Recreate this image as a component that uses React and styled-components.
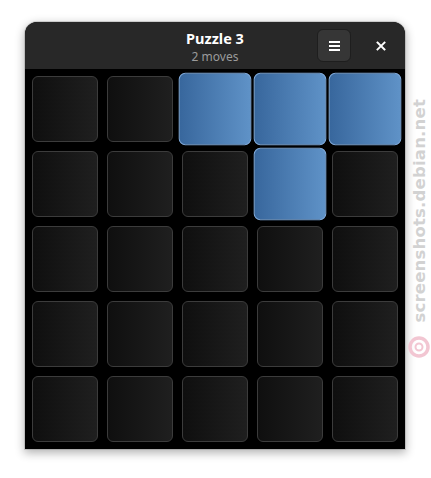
import React from "react";
import styled, { createGlobalStyle } from "styled-components";

const Global = createGlobalStyle`
  html, body { margin: 0; padding: 0; background: #ffffff; }
  body { font-family: "Noto Sans", "DejaVu Sans", sans-serif; }
`;

const Page = styled.div`
  width: 431px;
  height: 478px;
  box-sizing: border-box;
  padding: 22px 0 0 25px;
  display: flex;
  align-items: flex-start;
  position: relative;
  overflow: hidden;
`;

const Window = styled.div`
  width: 380px;
  display: flex;
  flex-direction: column;
  border-radius: 12px 12px 0 0;
  overflow: hidden;
  box-shadow: 0 3px 10px 1px rgba(0, 0, 0, 0.3), 0 0 0 1px rgba(0, 0, 0, 0.12);
  background: #000;
`;

const HeaderBar = styled.div`
  height: 47px;
  background: #282828;
  display: grid;
  grid-template-columns: 1fr auto 1fr;
  align-items: center;
`;

const TitleBox = styled.div`
  display: flex;
  flex-direction: column;
  align-items: center;
  gap: 2px;
  padding-top: 1px;
`;

const Title = styled.div`
  color: #ffffff;
  font-weight: 700;
  font-size: 14.5px;
  line-height: 18px;
`;

const Subtitle = styled.div`
  color: #9b9b9b;
  font-size: 12px;
  line-height: 15px;
`;

const RightGroup = styled.div`
  display: flex;
  justify-content: flex-end;
  align-items: center;
  padding-right: 12px;
  gap: 18px;
`;

const MenuButton = styled.div`
  width: 34px;
  height: 33px;
  box-sizing: border-box;
  border-radius: 6px;
  background: #363636;
  border: 1px solid #1e1e1e;
  display: flex;
  align-items: center;
  justify-content: center;
`;

const CloseButton = styled.div`
  width: 24px;
  height: 24px;
  display: flex;
  align-items: center;
  justify-content: center;
`;

const Board = styled.div`
  display: grid;
  grid-template-columns: repeat(5, 66px);
  grid-auto-rows: 66px;
  gap: 9px;
  padding: 7px;
  background: #000;
`;

const Tile = styled.div`
  box-sizing: border-box;
  border-radius: 6px;
  border: 1px solid ${(p) => (p.$on ? "#7ea9da" : "#3c3c3c")};
  background: ${(p) =>
    p.$on
      ? "linear-gradient(90deg, #38679d 0%, #5f92c7 100%)"
      : "linear-gradient(90deg, #0f0f0f 0%, #1f1f1f 100%)"};
  transform: ${(p) => (p.$on ? "scale(1.1)" : "none")};
`;

const Watermark = styled.div`
  position: absolute;
  right: 0;
  top: 99px;
  width: 24px;
  display: flex;
  flex-direction: column;
  align-items: center;
  gap: 13px;
`;

const MarkText = styled.div`
  writing-mode: vertical-rl;
  transform: rotate(180deg);
  font-family: "DejaVu Sans", sans-serif;
  font-weight: 700;
  font-size: 16.5px;
  color: #d2d2d2;
  letter-spacing: 0.2px;
`;

const on = new Set(["0-2", "0-3", "0-4", "1-3"]);

export default function App() {
  const rows = [0, 1, 2, 3, 4];
  return (
    <>
      <Global />
      <Page>
        <Window>
          <HeaderBar>
            <div />
            <TitleBox>
              <Title>Puzzle 3</Title>
              <Subtitle>2 moves</Subtitle>
            </TitleBox>
            <RightGroup>
              <MenuButton>
                <svg width="11" height="10" viewBox="0 0 11 10">
                  <rect x="0" y="0" width="11" height="2" fill="#fff" />
                  <rect x="0" y="4" width="11" height="2" fill="#fff" />
                  <rect x="0" y="8" width="11" height="2" fill="#fff" />
                </svg>
              </MenuButton>
              <CloseButton>
                <svg width="10" height="10" viewBox="0 0 10 10">
                  <path d="M1.5 1.5 L8.5 8.5 M8.5 1.5 L1.5 8.5" stroke="#fff" strokeWidth="1.9" strokeLinecap="square" />
                </svg>
              </CloseButton>
            </RightGroup>
          </HeaderBar>
          <Board>
            {rows.map((r) =>
              rows.map((c) => <Tile key={`${r}-${c}`} $on={on.has(`${r}-${c}`)} />)
            )}
          </Board>
        </Window>
        <Watermark>
          <MarkText>screenshots.debian.net</MarkText>
          <svg width="22" height="22" viewBox="0 0 22 22">
            <circle cx="11" cy="11" r="9" fill="none" stroke="#f2c6d2" strokeWidth="3.5" />
            <circle cx="11" cy="11" r="3.5" fill="none" stroke="#f2c6d2" strokeWidth="2" />
          </svg>
        </Watermark>
      </Page>
    </>
  );
}
